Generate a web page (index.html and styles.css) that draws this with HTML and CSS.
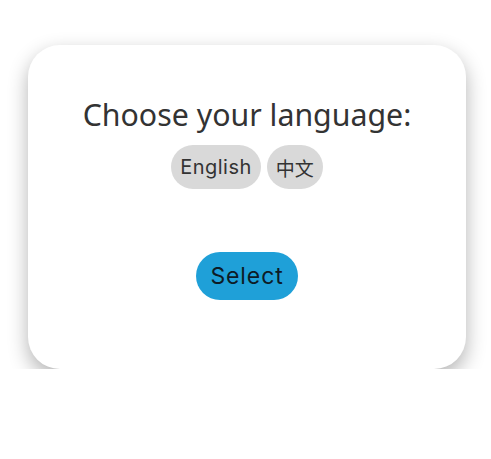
FILE: index.html
```html
<!DOCTYPE html>
<html lang="en">
<head>
  <meta charset="UTF-8">
  <meta name="viewport" content="width=device-width, initial-scale=1.0">
  <title>Choose language</title>
  <link rel="stylesheet" href="styles.css">
</head>
<body>
  <div class="card">
    <h2 class="title">Choose your language:</h2>
    <div class="langs">
      <button class="lang">English</button>
      <button class="lang lang-zh">中文</button>
    </div>
    <button class="select">Select</button>
  </div>
</body>
</html>
```

FILE: styles.css
```css
body {
  margin: 0;
  padding: 45px 0 0;
  background: #fff;
  font-family: "Noto Sans", sans-serif;
}

.card {
  width: 438px;
  height: 324px;
  box-sizing: border-box;
  margin: 0 0 0 28px;
  padding-top: 49px;
  background: #fff;
  border-radius: 32px;
  box-shadow: 0 8px 20px rgba(0, 0, 0, 0.3);
  display: flex;
  flex-direction: column;
  align-items: center;
}

.title {
  margin: 0;
  font-size: 30.3px;
  font-weight: 400;
  color: #333;
  line-height: 41px;
}

.langs {
  display: flex;
  gap: 6px;
  margin-top: 10px;
}

.lang {
  height: 44px;
  padding: 0 9px;
  border: none;
  border-radius: 22px;
  background: #d9d9d9;
  color: #333;
  font-family: "Inter", "Noto Sans CJK SC", sans-serif;
  font-size: 20px;
  letter-spacing: 0.5px;
}

.lang-zh {
  font-size: 19px;
  letter-spacing: 0;
}

.select {
  margin-top: 63px;
  height: 48px;
  padding: 0 14px;
  border: none;
  border-radius: 24px;
  background: #1fa0d8;
  color: #0d1b26;
  font-family: "Inter", sans-serif;
  font-size: 23px;
  letter-spacing: 0.9px;
}
```
